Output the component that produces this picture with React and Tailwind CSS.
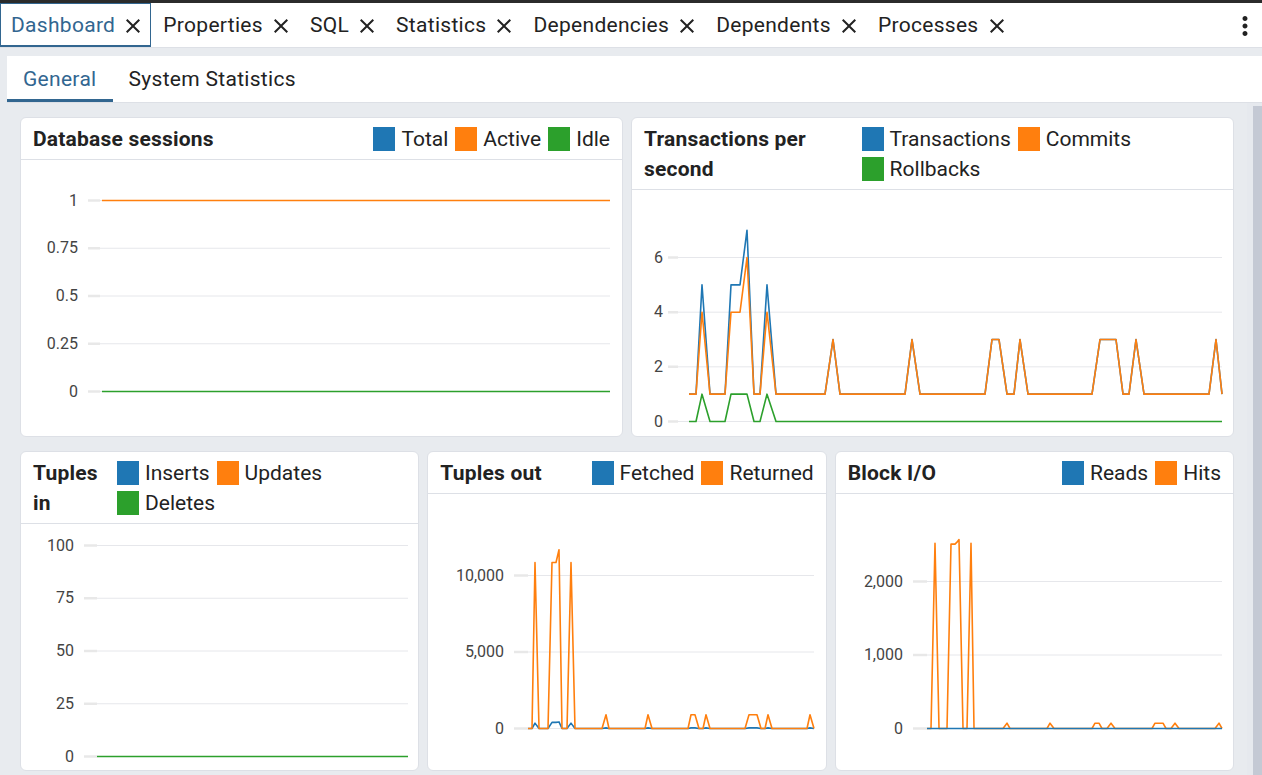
import React from 'react';

const BLUE = '#1f77b4';
const ORANGE = '#ff7f0e';
const GREEN = '#2ca02c';

const TABS = ['Dashboard', 'Properties', 'SQL', 'Statistics', 'Dependencies', 'Dependents', 'Processes'];

function CloseIcon() {
  return (
    <svg width="24" height="24" viewBox="0 0 24 24" fill="#222">
      <path d="M19 6.41 17.59 5 12 10.59 6.41 5 5 6.41 10.59 12 5 17.59 6.41 19 12 13.41 17.59 19 19 17.59 13.41 12z" />
    </svg>
  );
}

function MoreIcon() {
  return (
    <svg width="30" height="30" viewBox="0 0 24 24" fill="#222">
      <path d="M12 8c1.1 0 2-.9 2-2s-.9-2-2-2-2 .9-2 2 .9 2 2 2zm0 2c-1.1 0-2 .9-2 2s.9 2 2 2 2-.9 2-2-.9-2-2-2zm0 6c-1.1 0-2 .9-2 2s.9 2 2 2 2-.9 2-2-.9-2-2-2z" />
    </svg>
  );
}

// points are [page x, value]; converted to the chart body's own pixels
function LineChart({ left, top, zeroY, unit, labelRight, tickFrom, tickTo, gridTo, ticks, series }) {
  const X = (x) => x - left - 1;
  const Y = (v) => zeroY - v * unit - top;
  return (
    <svg className="absolute inset-0" width="100%" height="100%">
      {ticks.map(([v, label]) => (
        <g key={label}>
          <line x1={X(tickTo)} x2={X(gridTo)} y1={Y(v) + 0.5} y2={Y(v) + 0.5} stroke="#e6e7eb" strokeWidth="1" />
          <line x1={X(tickFrom)} x2={X(tickTo)} y1={Y(v) + 0.5} y2={Y(v) + 0.5} stroke="#e8e8e8" strokeWidth="2.5" />
          <text
            x={X(labelRight)}
            y={Y(v)}
            textAnchor="end"
            dominantBaseline="central"
            fontSize="16"
            fontFamily="Roboto, sans-serif"
            fill="#444"
          >
            {label}
          </text>
        </g>
      ))}
      {series.map((s, i) => (
        <polyline
          key={i}
          points={s.points.map(([x, v]) => `${X(x)},${Y(v) + 0.5}`).join(' ')}
          fill="none"
          stroke={s.color}
          strokeWidth="1.6"
          strokeLinejoin="round"
        />
      ))}
    </svg>
  );
}

function Legend({ items }) {
  return (
    <div className="ml-auto flex flex-wrap gap-x-[7px]">
      {items.map(([label, color]) => (
        <div key={label} className="flex items-center text-[21px] leading-[30px] text-[#222]">
          <span
            className={`w-[22px] h-[24px] mr-[6px] ${color === BLUE ? 'bg-[#1f77b4]' : color === ORANGE ? 'bg-[#ff7f0e]' : 'bg-[#2ca02c]'}`}
          />
          <span>{label}</span>
        </div>
      ))}
    </div>
  );
}

function Card({ title, legend, children }) {
  return (
    <div className="bg-white border border-[#dde0e6] rounded-md flex flex-col overflow-hidden min-w-0">
      <div className="flex items-start gap-[2px] px-3 pt-[6px] pb-[5px] border-b border-[#dde0e6]">
        <div className="font-bold text-[21px] tracking-[0.2px] leading-[30px] text-[#222]">{title}</div>
        <Legend items={legend} />
      </div>
      <div className="flex-1 min-h-0 relative">{children}</div>
    </div>
  );
}

const txOrange = [
  [689, 1], [696, 1], [702, 4], [710, 1], [725, 1], [731, 4], [740, 4], [747, 6], [754, 1], [760, 1],
  [767, 4], [776, 1], [825, 1], [833, 3], [840, 1], [905, 1], [912, 3], [920, 1], [985, 1], [992, 3],
  [999, 3], [1007, 1], [1014, 1], [1020, 3], [1028, 1], [1092, 1], [1100, 3], [1116, 3], [1123, 1],
  [1129, 1], [1136, 3], [1144, 1], [1209, 1], [1216, 3], [1222, 1],
];
const txBlue = txOrange.map(([x, v]) => {
  const extra = { 702: 5, 731: 5, 740: 5, 747: 7, 767: 5 };
  return [x, extra[x] ?? v];
});
const txGreen = [
  [689, 0], [696, 0], [702, 1], [710, 0], [725, 0], [731, 1], [747, 1], [754, 0], [760, 0], [767, 1],
  [776, 0], [1222, 0],
];

const toOrange = [
  [529, 0], [533, 0], [536, 10850], [540, 0], [549, 0], [553, 10850], [557, 10850], [560, 11680],
  [563, 0], [568, 0], [572, 10850], [576, 0], [603, 0], [607, 900], [610, 0], [646, 0], [649, 900],
  [653, 0], [689, 0], [692, 900], [696, 900], [700, 0], [704, 0], [707, 900], [711, 0], [746, 0],
  [750, 900], [758, 900], [762, 0], [766, 0], [769, 900], [773, 0], [808, 0], [811, 900], [815, 0],
];
const toBlue = [
  [529, 0], [533, 0], [536, 350], [540, 0], [549, 0], [553, 400], [557, 400], [560, 430], [563, 0],
  [568, 0], [572, 350], [576, 0], [603, 0], [607, 40], [610, 0], [646, 0], [649, 40], [653, 0],
  [689, 0], [692, 40], [696, 40], [700, 0], [704, 0], [707, 40], [711, 0], [746, 0], [750, 40],
  [758, 40], [762, 0], [766, 0], [769, 40], [773, 0], [808, 0], [811, 40], [815, 0],
];

const bioOrange = [
  [927, 0], [931, 0], [935, 2520], [939, 0], [947, 0], [951, 2508], [955, 2508], [957, 2535],
  [959, 2570], [963, 0], [967, 0], [971, 2520], [974, 0], [1003, 0], [1007, 72], [1010, 0],
  [1047, 0], [1050, 72], [1054, 0], [1092, 0], [1095, 72], [1099, 72], [1102, 0], [1107, 0],
  [1111, 72], [1115, 0], [1152, 0], [1155, 72], [1163, 72], [1166, 0], [1171, 0], [1175, 72],
  [1179, 0], [1215, 0], [1219, 72], [1222, 0],
];

export default function App() {
  return (
    <div className="h-[775px] w-[1262px] overflow-hidden bg-[#e8ebef] font-['Roboto',sans-serif] flex flex-col">
      <div className="h-[3px] bg-[#2b2b2b]" />
      <div className="h-[45px] bg-white flex items-stretch border-b border-[#dde0e6]">
        {TABS.map((t, i) => (
          <div
            key={t}
            className={`flex items-center gap-[6px] pr-[5px] pt-[2px] text-[21px] tracking-[0.3px] ${
              i === 0 ? 'pl-[10px] border border-b-2 border-[#326690] text-[#326690]' : 'pl-[12px] text-[#222]'
            }`}
          >
            <span>{t}</span>
            <CloseIcon />
          </div>
        ))}
        <div className="ml-auto flex items-center pr-[2px] pt-[2px]">
          <MoreIcon />
        </div>
      </div>
      <div className="flex-1 min-h-0 flex flex-col pl-[7px] pt-[8px]">
        <div className="bg-white h-[47px] flex items-stretch border-b border-[#dde0e6] shrink-0">
          <div className="flex items-center px-4 pt-[5px] text-[21px] tracking-[0.3px] text-[#326690] border-b-[3px] border-[#326690]">
            General
          </div>
          <div className="flex items-center px-4 pt-[2px] text-[21px] tracking-[0.3px] text-[#222]">System Statistics</div>
        </div>
        <div className="flex-1 min-h-0 flex">
          <div className="flex-1 min-w-0 px-[13px] pt-[14px] flex flex-col gap-[14px] overflow-hidden">
            <div className="grid grid-cols-2 gap-x-2 h-[320px] shrink-0">
              <Card title="Database sessions" legend={[['Total', BLUE], ['Active', ORANGE], ['Idle', GREEN]]}>
                <LineChart
                  left={20}
                  top={160}
                  zeroY={391}
                  unit={191}
                  labelRight={78}
                  tickFrom={88}
                  tickTo={100}
                  gridTo={610}
                  ticks={[[1, '1'], [0.75, '0.75'], [0.5, '0.5'], [0.25, '0.25'], [0, '0']]}
                  series={[
                    { color: ORANGE, points: [[102, 1], [610, 1]] },
                    { color: GREEN, points: [[102, 0], [610, 0]] },
                  ]}
                />
              </Card>
              <Card
                title="Transactions per second"
                legend={[['Transactions', BLUE], ['Commits', ORANGE], ['Rollbacks', GREEN]]}
              >
                <LineChart
                  left={631}
                  top={190}
                  zeroY={421}
                  unit={27.33}
                  labelRight={663}
                  tickFrom={668}
                  tickTo={678}
                  gridTo={1222}
                  ticks={[[6, '6'], [4, '4'], [2, '2'], [0, '0']]}
                  series={[
                    { color: BLUE, points: txBlue },
                    { color: ORANGE, points: txOrange },
                    { color: GREEN, points: txGreen },
                  ]}
                />
              </Card>
            </div>
            <div className="grid grid-cols-3 gap-x-2 h-[320px] shrink-0">
              <Card title="Tuples in" legend={[['Inserts', BLUE], ['Updates', ORANGE], ['Deletes', GREEN]]}>
                <LineChart
                  left={20}
                  top={524}
                  zeroY={756}
                  unit={2.11}
                  labelRight={74}
                  tickFrom={84}
                  tickTo={97}
                  gridTo={408}
                  ticks={[[100, '100'], [75, '75'], [50, '50'], [25, '25'], [0, '0']]}
                  series={[{ color: GREEN, points: [[97, 0], [408, 0]] }]}
                />
              </Card>
              <Card title="Tuples out" legend={[['Fetched', BLUE], ['Returned', ORANGE]]}>
                <LineChart
                  left={428}
                  top={493}
                  zeroY={727}
                  unit={0.0153}
                  labelRight={505}
                  tickFrom={515}
                  tickTo={529}
                  gridTo={815}
                  ticks={[[10000, '10,000'], [5000, '5,000'], [0, '0']]}
                  series={[
                    { color: BLUE, points: toBlue },
                    { color: ORANGE, points: toOrange },
                  ]}
                />
              </Card>
              <Card title="Block I/O" legend={[['Reads', BLUE], ['Hits', ORANGE]]}>
                <LineChart
                  left={835}
                  top={493}
                  zeroY={727}
                  unit={0.0735}
                  labelRight={903}
                  tickFrom={913}
                  tickTo={927}
                  gridTo={1222}
                  ticks={[[2000, '2,000'], [1000, '1,000'], [0, '0']]}
                  series={[
                    { color: ORANGE, points: bioOrange },
                    { color: BLUE, points: [[927, 0], [1222, 0]] },
                  ]}
                />
              </Card>
            </div>
          </div>
          <div className="w-[15px] bg-[#e6e9ee] flex justify-end">
            <div className="w-[9px] h-full mt-[3px] bg-[#c4c9d4]" />
          </div>
        </div>
      </div>
    </div>
  );
}
